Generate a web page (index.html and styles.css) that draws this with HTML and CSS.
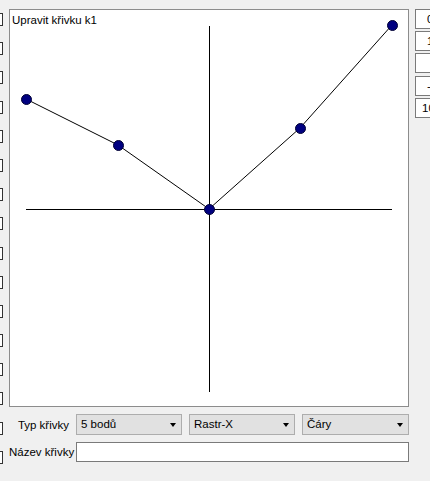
FILE: index.html
```html
<!DOCTYPE html>
<html lang="cs">
	<head>
		<meta charset="UTF-8" />
		<meta name="viewport" content="width=device-width, initial-scale=1.0" />
		<title>Křivky</title>
		<link rel="stylesheet" href="styles.css">
	</head>
	<body>
		<div class="window">
			<div class="checks">
				<span class="check"></span><span class="check"></span><span class="check"></span><span class="check"></span>
				<span class="check"></span><span class="check"></span><span class="check"></span><span class="check"></span>
				<span class="check"></span><span class="check"></span><span class="check"></span><span class="check"></span>
				<span class="check"></span><span class="check"></span><span class="check"></span><span class="check"></span>
			</div>

			<div class="main">
				<div class="plot">
					<div class="plot-title">Upravit křivku k1</div>
					<!-- osy a body křivky -->
					<svg class="plot-canvas" viewBox="0 0 398 396" width="398" height="396">
						<line x1="199.5" y1="16" x2="199.5" y2="382" stroke="#000" stroke-width="1" />
						<line x1="16" y1="199.5" x2="382" y2="199.5" stroke="#000" stroke-width="1" />
						<polyline points="16,89 108,135 199,199 290,118 382,15" fill="none" stroke="#000" stroke-width="1" />
						<g fill="#000080" stroke="#000033" stroke-width="1">
							<circle cx="16.5" cy="89.5" r="5" />
							<circle cx="108.5" cy="135.5" r="5" />
							<circle cx="199.5" cy="199.5" r="5" />
							<circle cx="290.5" cy="118.5" r="5" />
							<circle cx="382.5" cy="15.5" r="5" />
						</g>
					</svg>
				</div>

				<div class="form-row">
					<label class="form-label">Typ křivky</label>
					<div class="combo">5 bodů</div>
					<div class="combo">Rastr-X</div>
					<div class="combo">Čáry</div>
				</div>
				<div class="form-row">
					<label class="form-label">Název křivky</label>
					<div class="textbox"></div>
				</div>
			</div>

			<div class="side">
				<div class="side-field centered">0</div>
				<div class="side-field centered">1</div>
				<div class="side-field centered"></div>
				<div class="side-field centered">-</div>
				<div class="side-field">100</div>
			</div>
		</div>
	</body>
</html>
```

FILE: styles.css
```css
* {
	box-sizing: border-box;
	margin: 0;
	padding: 0;
}
body {
	background-color: #f0f0f0;
	overflow: hidden;
	font-family: "Liberation Sans", Arial, sans-serif;
	font-size: 11.5px;
	color: #000;
}
.window {
	display: flex;
	height: 481px;
}

/* sloupec zaškrtávátek vlevo, useknutý okrajem okna */
.checks {
	display: flex;
	flex-direction: column;
	gap: 16.2px;
	width: 13px;
	margin-left: -10px;
	padding-top: 13px;
	flex-shrink: 0;
}
.check {
	display: block;
	width: 13px;
	height: 13px;
	background-color: #fff;
	border: 1px solid #333;
}

.main {
	display: flex;
	flex-direction: column;
	width: 400px;
	margin-left: 6px;
	padding-top: 9px;
	flex-shrink: 0;
}
.plot {
	position: relative;
	height: 398px;
	background-color: #fff;
	border: 1px solid #8c8c8c;
}
.plot-canvas {
	position: absolute;
	top: 0;
	left: 0;
	display: block;
}
.plot-title {
	position: absolute;
	top: 4px;
	left: 2px;
	z-index: 1;
}

.form-row {
	display: grid;
	grid-template-columns: 60px 106px 106px 107px;
	column-gap: 7px;
	align-items: center;
	margin-top: 7px;
}
.form-label {
	text-align: right;
	white-space: nowrap;
}
.combo {
	position: relative;
	height: 21px;
	line-height: 19px;
	padding-left: 4px;
	background-color: #e1e1e1;
	border: 1px solid #adadad;
}
.combo:after {
	content: "";
	position: absolute;
	right: 5px;
	top: 8px;
	border-left: 3.5px solid transparent;
	border-right: 3.5px solid transparent;
	border-top: 4px solid #000;
}
.textbox {
	grid-column: 2 / 5;
	height: 20px;
	background-color: #fff;
	border: 1px solid #7a7a7a;
}

/* pravý sloupec polí, z okna vidět jen kraj */
.side {
	display: flex;
	flex-direction: column;
	gap: 2.2px;
	margin-left: 6px;
	padding-top: 9px;
	flex-shrink: 0;
}
.side-field {
	width: 40px;
	height: 20px;
	line-height: 18px;
	padding-left: 6px;
	background-color: #fff;
	border: 1px solid #7a7a7a;
}
.side-field.centered {
	padding-left: 11px;
}
```
